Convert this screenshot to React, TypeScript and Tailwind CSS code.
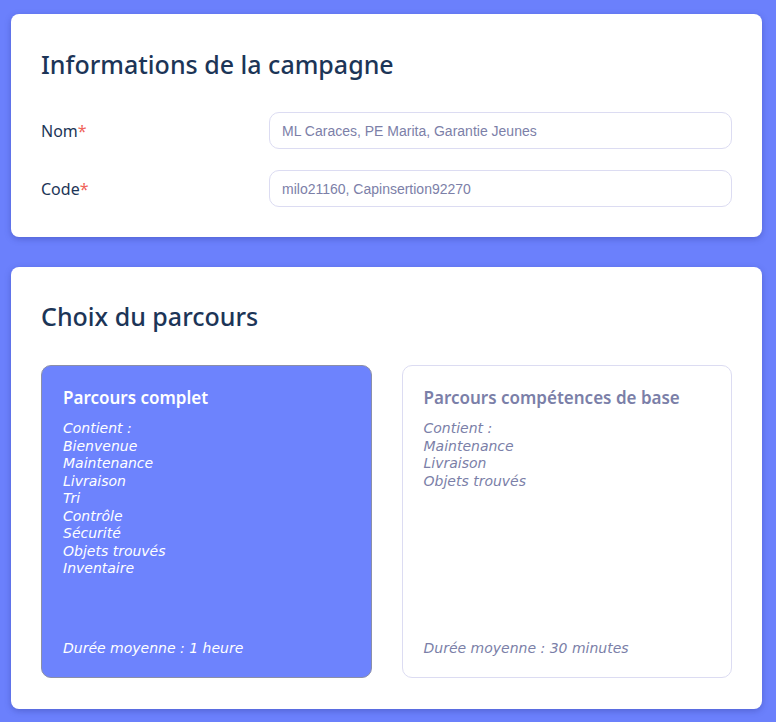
import type { ReactNode } from "react";

const headingFont = "[font-family:'Noto_Sans','Open_Sans',sans-serif]";
const listFont = "[font-family:'DejaVu_Sans',sans-serif]";

type Parcours = {
  title: string;
  items: string[];
  duree: string;
  selected?: boolean;
};

const parcours: Parcours[] = [
  {
    title: "Parcours complet",
    items: ["Bienvenue", "Maintenance", "Livraison", "Tri", "Contrôle", "Sécurité", "Objets trouvés", "Inventaire"],
    duree: "1 heure",
    selected: true,
  },
  {
    title: "Parcours compétences de base",
    items: ["Maintenance", "Livraison", "Objets trouvés"],
    duree: "30 minutes",
  },
];

function Card({ title, children, className }: { title: string; children: ReactNode; className?: string }) {
  return (
    <div className={`rounded-lg bg-white px-[30px] shadow-[0_2px_6px_rgba(40,50,140,0.35)] ${className ?? ""}`}>
      <h2 className={`${headingFont} text-[25px] font-medium leading-[24px] text-[#1c3557]`}>{title}</h2>
      {children}
    </div>
  );
}

function Field({ label, placeholder }: { label: string; placeholder: string }) {
  return (
    <div className="flex items-center">
      <label className={`${headingFont} w-[228px] text-[16px] text-[#1c3557]`}>
        {label}
        <span className="text-[#f0645a]">*</span>
      </label>
      <input
        placeholder={placeholder}
        className="h-[37px] flex-1 rounded-[10px] border border-[#dcdcf2] px-3 font-['Liberation_Sans',sans-serif] text-[14px] text-[#3a3f6b] outline-none placeholder:text-[#7c80a8]"
      />
    </div>
  );
}

export default function App() {
  return (
    <div className="flex min-h-[722px] flex-col gap-[30px] bg-[#6b80fc] pb-[14px] pl-[11px] pr-[14px] pt-[14px]">
      <Card title="Informations de la campagne" className="pb-[30px] pt-[38px]">
        <div className="mt-[36px] flex flex-col gap-[21px]">
          <Field label="Nom" placeholder="ML Caraces, PE Marita, Garantie Jeunes" />
          <Field label="Code" placeholder="milo21160, Capinsertion92270" />
        </div>
      </Card>

      <Card title="Choix du parcours" className="pb-[31px] pt-[37px]">
        <div className="mt-[37px] grid grid-cols-2 gap-[30px]">
          {parcours.map(p => (
            <div
              key={p.title}
              className={`flex h-[313px] flex-col justify-between rounded-[10px] border px-[21px] pb-[20px] pt-[20px] ${
                p.selected
                  ? "border-[#8b8fa8] bg-[#6d83fd] text-white"
                  : "border-[#dcdcf2] bg-white text-[#7b7fa8]"
              }`}
            >
              <div>
                <h3 className={`${headingFont} text-[17px] font-semibold leading-[24px]`}>{p.title}</h3>
                <div className={`${listFont} mt-[10px] text-[14px] italic leading-[17.5px]`}>
                  <div>Contient :</div>
                  {p.items.map(i => (
                    <div key={i}>{i}</div>
                  ))}
                </div>
              </div>
              <div className={`${listFont} text-[14px] italic leading-[17.5px]`}>Durée moyenne : {p.duree}</div>
            </div>
          ))}
        </div>
      </Card>
    </div>
  );
}
